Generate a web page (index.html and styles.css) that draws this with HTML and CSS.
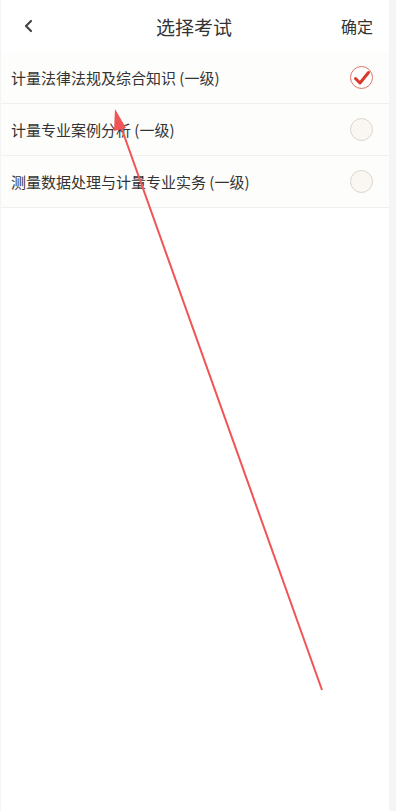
FILE: index.html
```html
<!DOCTYPE html>
<html lang="zh-CN">
<head>
  <meta charset="UTF-8" />
  <meta name="viewport" content="width=device-width, initial-scale=1.0" />
  <title>选择考试</title>
  <link rel="stylesheet" href="styles.css">
</head>
<body>
  <div class="page">
    <header class="topbar">
      <a class="back" href="#">
        <svg width="12" height="14" viewBox="0 0 12 14"><path d="M8 2 L3 7 L8 12" fill="none" stroke="#444" stroke-width="2.2" stroke-linecap="round" stroke-linejoin="round"/></svg>
      </a>
      <h1>选择考试</h1>
      <a class="ok" href="#">确定</a>
    </header>

    <ul class="exam-list">
      <li class="exam">
        <span>计量法律法规及综合知识 (一级)</span>
        <span class="radio checked">
          <svg width="18" height="16" viewBox="0 0 18 16"><path d="M2.5 8.5 L7 13 L15.5 2.5" fill="none" stroke="#d8392b" stroke-width="3" stroke-linecap="round" stroke-linejoin="round"/></svg>
        </span>
      </li>
      <li class="exam">
        <span>计量专业案例分析 (一级)</span>
        <span class="radio"></span>
      </li>
      <li class="exam">
        <span>测量数据处理与计量专业实务 (一级)</span>
        <span class="radio"></span>
      </li>
    </ul>
  </div>

  <svg class="annotation" width="396" height="811" viewBox="0 0 396 811">
    <line x1="322" y1="690" x2="120" y2="124" stroke="#f05454" stroke-width="2"/>
    <polygon points="115,109 126,128 114,131" fill="#f05454"/>
  </svg>
</body>
</html>
```

FILE: styles.css
```css
html, body {
  margin: 0;
  padding: 0;
  height: 100%;
}
body {
  font-family: "Noto Sans CJK SC", "Noto Sans", sans-serif;
  background-color: #f5f5f5;
  color: #333;
  position: relative;
  width: 396px;
  min-height: 811px;
}
.page {
  width: 389px;
  min-height: 811px;
  background-color: #fff;
  border-left: 1px solid #f4f4f4;
  box-sizing: border-box;
}
.topbar {
  height: 52px;
  display: grid;
  grid-template-columns: 1fr auto 1fr;
  align-items: center;
  padding: 0 16px 0 22px;
}
.back {
  display: flex;
}
.topbar h1 {
  margin: 0;
  font-size: 19px;
  font-weight: normal;
  color: #333;
  position: relative;
  left: -4px;
}
.ok {
  justify-self: end;
  font-size: 16px;
  color: #333;
  text-decoration: none;
}
.exam-list {
  list-style: none;
  margin: 0;
  padding: 0;
}
.exam {
  height: 51px;
  display: flex;
  align-items: center;
  justify-content: space-between;
  padding: 0 16px 0 10px;
  border-bottom: 1px solid #f0f0f0;
  background-color: #fdfdfc;
  font-size: 15px;
  color: #333;
}
.radio {
  width: 21px;
  height: 21px;
  border-radius: 50%;
  border: 1px solid #dcd6cc;
  background-color: #faf7f2;
  display: flex;
  align-items: center;
  justify-content: center;
}
.radio.checked {
  border-color: #e07468;
  background-color: #fff;
}
.annotation {
  position: absolute;
  left: 0;
  top: 0;
  pointer-events: none;
}
```
